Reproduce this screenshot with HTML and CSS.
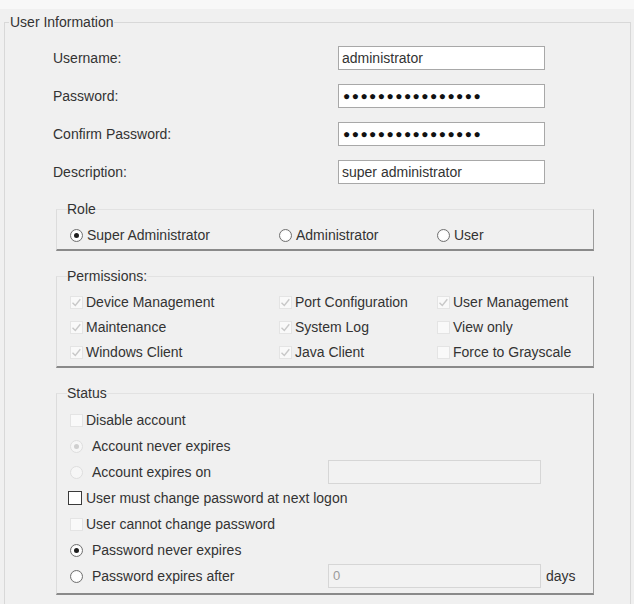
FILE: index.html
```html
<!DOCTYPE html>
<html>
<head>
<meta charset="utf-8">
<title>User Information</title>
<link rel="stylesheet" href="styles.css">
</head>
<body>
<div class="topstrip"></div>
<fieldset class="outer">
  <legend class="outer-legend">User Information</legend>
  <div class="fields">
    <div class="field"><span class="flabel">Username:</span><div class="tbox">administrator</div></div>
    <div class="field"><span class="flabel">Password:</span><div class="tbox pw">●●●●●●●●●●●●●●●●</div></div>
    <div class="field"><span class="flabel">Confirm Password:</span><div class="tbox pw">●●●●●●●●●●●●●●●●</div></div>
    <div class="field"><span class="flabel">Description:</span><div class="tbox">super administrator</div></div>
  </div>

  <fieldset class="group role">
    <legend>Role</legend>
    <div class="grid3">
      <div class="opt"><span class="rb on"></span>Super Administrator</div>
      <div class="opt"><span class="rb"></span>Administrator</div>
      <div class="opt"><span class="rb"></span>User</div>
    </div>
  </fieldset>

  <fieldset class="group perms">
    <legend>Permissions:</legend>
    <div class="grid3 permgrid">
      <div class="opt cbopt"><span class="cb dis"><svg viewBox="0 0 13 13"><path d="M2.5 6.8l2.8 2.7 5-6.2"/></svg></span>Device Management</div>
      <div class="opt cbopt"><span class="cb dis"><svg viewBox="0 0 13 13"><path d="M2.5 6.8l2.8 2.7 5-6.2"/></svg></span>Port Configuration</div>
      <div class="opt cbopt"><span class="cb dis"><svg viewBox="0 0 13 13"><path d="M2.5 6.8l2.8 2.7 5-6.2"/></svg></span>User Management</div>
      <div class="opt cbopt"><span class="cb dis"><svg viewBox="0 0 13 13"><path d="M2.5 6.8l2.8 2.7 5-6.2"/></svg></span>Maintenance</div>
      <div class="opt cbopt"><span class="cb dis"><svg viewBox="0 0 13 13"><path d="M2.5 6.8l2.8 2.7 5-6.2"/></svg></span>System Log</div>
      <div class="opt cbopt"><span class="cb dis"></span>View only</div>
      <div class="opt cbopt"><span class="cb dis"><svg viewBox="0 0 13 13"><path d="M2.5 6.8l2.8 2.7 5-6.2"/></svg></span>Windows Client</div>
      <div class="opt cbopt"><span class="cb dis"><svg viewBox="0 0 13 13"><path d="M2.5 6.8l2.8 2.7 5-6.2"/></svg></span>Java Client</div>
      <div class="opt cbopt"><span class="cb dis"></span>Force to Grayscale</div>
    </div>
  </fieldset>

  <fieldset class="group status">
    <legend>Status</legend>
    <div class="srow"><div class="opt cbopt"><span class="cb dis"></span>Disable account</div></div>
    <div class="srow"><div class="opt ropt"><span class="rb dis on"></span>Account never expires</div></div>
    <div class="srow"><div class="opt ropt wide"><span class="rb dis"></span>Account expires on</div><div class="tbox off"></div></div>
    <div class="srow"><div class="opt cbopt"><span class="cb en"></span>User must change password at next logon</div></div>
    <div class="srow"><div class="opt cbopt"><span class="cb dis"></span>User cannot change password</div></div>
    <div class="srow"><div class="opt ropt"><span class="rb on"></span>Password never expires</div></div>
    <div class="srow"><div class="opt ropt wide"><span class="rb"></span>Password expires after</div><div class="tbox off zero">0</div><span class="days">days</span></div>
  </fieldset>
</fieldset>
</body>
</html>
```

FILE: styles.css
```css
* { box-sizing: border-box; }
html, body { margin: 0; padding: 0; }
body {
  background: #f0f0f0;
  font-family: "Liberation Sans", Arial, sans-serif;
  font-size: 14px;
  color: #333;
  width: 634px;
  height: 604px;
  overflow: hidden;
}
.topstrip { height: 9px; background: #f8f8f8; }

.outer {
  margin: 5px 3px 0 4px;
  padding: 0;
  border: 1px solid #d8d8d8;
  border-bottom: none;
  min-width: 0;
  height: 620px;
}
.outer-legend { margin-left: 4px; padding: 0 1px; line-height: 16px; }

.fields {
  padding: 16px 0 0 48px;
  display: flex;
  flex-direction: column;
  gap: 14px;
}
.field {
  display: grid;
  grid-template-columns: 285px 207px;
  align-items: center;
  height: 24px;
}
.tbox {
  height: 24px;
  background: #fff;
  border: 1px solid #a8a8a8;
  padding: 0 3px;
  line-height: 22px;
  white-space: nowrap;
  overflow: hidden;
}
.tbox.pw {
  font-size: 12px;
  letter-spacing: 1.45px;
  color: #111;
  padding-left: 4px;
}
.tbox.off {
  width: 213px;
  background: #f2f2f2;
  border-color: #d6d6d6;
}
.tbox.zero { color: #9a9a9a; padding-left: 4px; font-size: 13px; }
.days { margin-left: 5px; }

.group {
  margin: 17px 0 0 51px;
  width: 538px;
  min-width: 0;
  padding: 0 0 4px 0;
  border-top: 1px solid #e2e2e2;
  border-left: 1px solid #dcdcdc;
  border-right: 1px solid #9c9c9c;
  border-bottom: 2px solid #8a8a8a;
}
.group legend { margin-left: 10px; padding: 0; line-height: 16px; }

.grid3 {
  display: grid;
  grid-template-columns: 209px 158px 1fr;
  padding-left: 13px;
  margin-top: 8px;
}
.role .grid3 { height: 20px; align-items: center; }
.permgrid { grid-auto-rows: 20px; row-gap: 5px; align-items: center; }

.opt { display: flex; align-items: center; gap: 4px; white-space: nowrap; }
.cbopt { gap: 3px; }
.ropt { gap: 9px; }
.wide { width: 258px; }

.srow {
  display: flex;
  align-items: center;
  height: 26px;
  padding-left: 13px;
}
.status .srow:first-of-type { margin-top: 6px; }

.rb {
  width: 13px;
  height: 13px;
  border-radius: 50%;
  border: 1px solid #707070;
  background: radial-gradient(circle at 50% 50%, #fff 0, #fff 50%, #e6e6e6 100%);
  position: relative;
  flex: none;
}
.rb.on::after {
  content: "";
  position: absolute;
  left: 3px;
  top: 3px;
  width: 5px;
  height: 5px;
  border-radius: 50%;
  background: #1e1e1e;
}
.rb.dis { border-color: #dedede; background: #f6f6f6; }
.rb.dis.on::after { background: #cfcfcf; }

.cb {
  width: 13px;
  height: 13px;
  flex: none;
  display: inline-flex;
}
.cb svg { width: 13px; height: 13px; }
.cb path { fill: none; stroke: #c8c8c8; stroke-width: 1.4; }
.cb.dis { border: 1px solid #e4e4e4; background: #f9f9f9; }
.cb.dis svg { margin: -1px; }
.cb.en {
  width: 14px;
  height: 14px;
  margin-left: -2px;
  margin-right: 1px;
  border: 1px solid #3a3a3a;
  background: #fff;
}
```
